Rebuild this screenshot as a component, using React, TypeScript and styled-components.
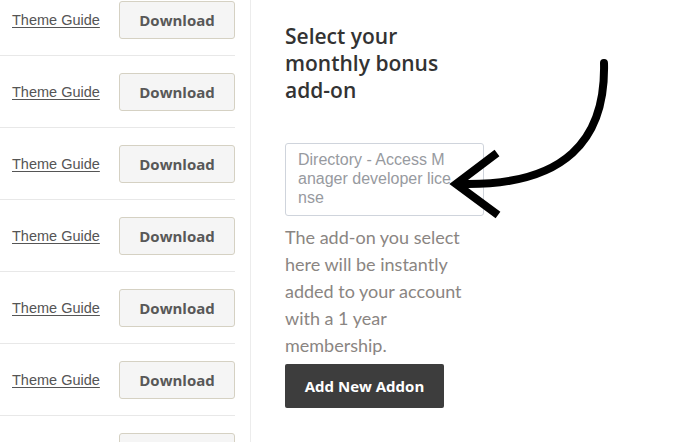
import { createGlobalStyle } from "styled-components";
import styled from "styled-components";

const GlobalStyle = createGlobalStyle`
  html, body {
    margin: 0;
    padding: 0;
    background: #fff;
    overflow: hidden;
  }
  body {
    font-family: "Lato", "Open Sans", sans-serif;
  }
`;

const Page = styled.div`
  display: flex;
  width: 700px;
  height: 442px;
  overflow: hidden;
`;

const ThemeList = styled.div`
  width: 235px;
  margin-top: -16px;
  margin-right: 15px;
  flex-shrink: 0;
`;

const Divider = styled.div`
  width: 1px;
  background: #ececec;
  flex-shrink: 0;
`;

const ThemeRow = styled.div`
  height: 71px;
  border-bottom: 1px solid #e8e8e8;
  display: flex;
  align-items: center;
  justify-content: space-between;
  padding-left: 12px;
`;

const GuideLink = styled.a`
  font-family: "Liberation Sans", Arial, sans-serif;
  font-size: 14.5px;
  color: #555;
  text-decoration: underline;
  text-underline-offset: 2px;
  cursor: pointer;
`;

const DownloadButton = styled.button`
  width: 116px;
  height: 38px;
  background: #f5f5f5;
  border: 1px solid #d5d1c3;
  border-radius: 3px;
  font-family: "Open Sans", sans-serif;
  font-weight: 700;
  font-size: 15px;
  color: #585858;
  cursor: pointer;
`;

const AddonPanel = styled.div`
  padding: 23px 0 0 34px;
  position: relative;
  flex-grow: 1;
`;

const Heading = styled.h2`
  margin: 0;
  font-family: "Open Sans", sans-serif;
  font-weight: 600;
  font-size: 21px;
  line-height: 27px;
  color: #333;
  width: 180px;
`;

const AddonBox = styled.div`
  margin-top: 39px;
  width: 199px;
  height: 73px;
  box-sizing: border-box;
  border: 1px solid #cfd4dc;
  border-radius: 3px;
  padding: 6px 30px 0 12px;
  font-family: "Liberation Sans", Arial, sans-serif;
  font-size: 16px;
  line-height: 19px;
  color: #979aa0;
  word-break: break-all;
`;

const Note = styled.p`
  margin: 8px 0 0;
  width: 190px;
  font-family: "Lato", sans-serif;
  font-size: 18px;
  line-height: 27px;
  color: #8a8582;
`;

const AddButton = styled.button`
  margin-top: 5px;
  width: 159px;
  height: 44px;
  background: #3d3d3d;
  border: none;
  border-radius: 2px;
  color: #fff;
  font-family: "Open Sans", sans-serif;
  font-weight: 700;
  font-size: 15px;
  cursor: pointer;
`;

const Arrow = styled.svg`
  position: absolute;
  left: 0;
  top: 0;
  pointer-events: none;
`;

export default function App() {
  const rows = Array.from({ length: 7 });
  return (
    <>
      <GlobalStyle />
      <Page>
        <ThemeList>
          {rows.map((_, i) => (
            <ThemeRow key={i}>
              <GuideLink>Theme Guide</GuideLink>
              <DownloadButton>Download</DownloadButton>
            </ThemeRow>
          ))}
        </ThemeList>
        <Divider />
        <AddonPanel>
          <Heading>Select your monthly bonus add-on</Heading>
          <AddonBox>Directory - Access Manager developer license</AddonBox>
          <Note>The add-on you select here will be instantly added to your account with a 1 year membership.</Note>
          <AddButton>Add New Addon</AddButton>
          <Arrow width="450" height="442" viewBox="251 0 450 442">
            <path d="M604 63 C 606 140, 565 186, 462 184" fill="none" stroke="#000" strokeWidth="8" strokeLinecap="round" />
            <path d="M497 153 L 456 184 L 498 215" fill="none" stroke="#000" strokeWidth="8" strokeLinecap="butt" strokeLinejoin="miter" />
          </Arrow>
        </AddonPanel>
      </Page>
    </>
  );
}
